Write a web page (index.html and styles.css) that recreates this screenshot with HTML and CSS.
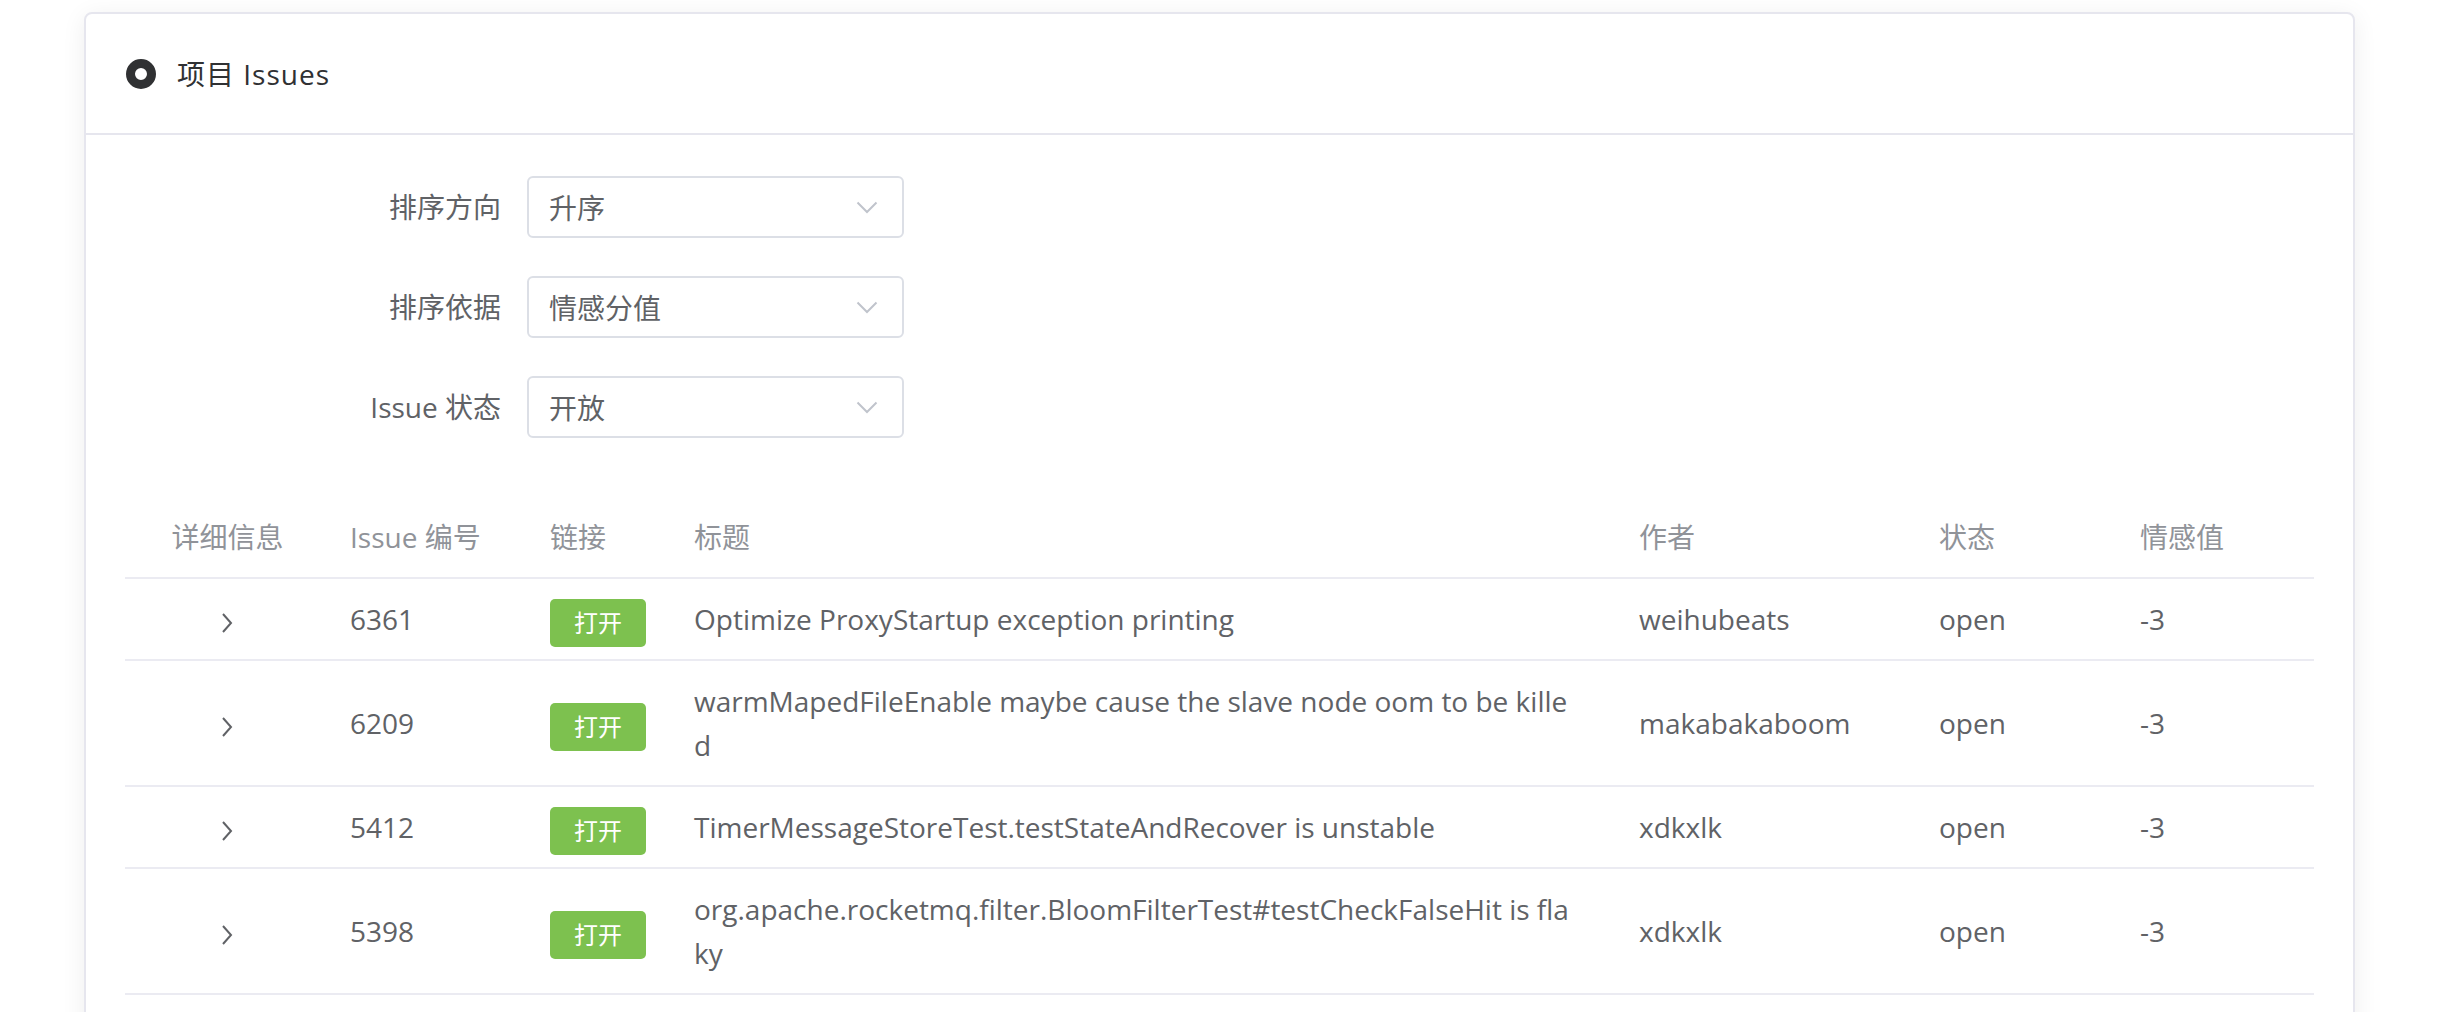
FILE: index.html
```html
<!DOCTYPE html>
<html lang="zh-CN">
<head>
<meta charset="utf-8">
<title>项目 Issues</title>
<link rel="stylesheet" href="styles.css">
</head>
<body>
<div class="card">
  <div class="card-header">
    <svg class="title-icon" width="30" height="30" viewBox="0 0 30 30"><circle cx="15" cy="15" r="10.5" fill="none" stroke="#303133" stroke-width="9"/></svg>
    <span class="card-title">项目 Issues</span>
  </div>
  <div class="card-body">
    <form class="filter-form">
      <div class="form-item">
        <label class="form-label">排序方向</label>
        <div class="select"><span class="select-value">升序</span><svg class="select-arrow" width="22" height="13" viewBox="0 0 22 13"><path d="M1.5 1.5 L11 11 L20.5 1.5" fill="none" stroke="#c0c4cc" stroke-width="2"/></svg></div>
      </div>
      <div class="form-item">
        <label class="form-label">排序依据</label>
        <div class="select"><span class="select-value">情感分值</span><svg class="select-arrow" width="22" height="13" viewBox="0 0 22 13"><path d="M1.5 1.5 L11 11 L20.5 1.5" fill="none" stroke="#c0c4cc" stroke-width="2"/></svg></div>
      </div>
      <div class="form-item">
        <label class="form-label">Issue 状态</label>
        <div class="select"><span class="select-value">开放</span><svg class="select-arrow" width="22" height="13" viewBox="0 0 22 13"><path d="M1.5 1.5 L11 11 L20.5 1.5" fill="none" stroke="#c0c4cc" stroke-width="2"/></svg></div>
      </div>
    </form>
    <table class="issues">
      <colgroup>
        <col class="c-detail"><col class="c-num"><col class="c-link"><col class="c-title"><col class="c-author"><col class="c-state"><col class="c-score">
      </colgroup>
      <thead>
        <tr><th class="center">详细信息</th><th>Issue 编号</th><th>链接</th><th>标题</th><th>作者</th><th>状态</th><th>情感值</th></tr>
      </thead>
      <tbody>
        <tr>
          <td class="center"><svg class="expand" width="12" height="20" viewBox="0 0 12 20"><path d="M2 1 L10 10 L2 19" fill="none" stroke="#606266" stroke-width="2"/></svg></td>
          <td>6361</td><td><span class="tag">打开</span></td>
          <td class="title">Optimize ProxyStartup exception printing</td>
          <td>weihubeats</td><td>open</td><td>-3</td>
        </tr>
        <tr>
          <td class="center"><svg class="expand" width="12" height="20" viewBox="0 0 12 20"><path d="M2 1 L10 10 L2 19" fill="none" stroke="#606266" stroke-width="2"/></svg></td>
          <td>6209</td><td><span class="tag">打开</span></td>
          <td class="title">warmMapedFileEnable maybe cause the slave node oom to be killed</td>
          <td>makabakaboom</td><td>open</td><td>-3</td>
        </tr>
        <tr>
          <td class="center"><svg class="expand" width="12" height="20" viewBox="0 0 12 20"><path d="M2 1 L10 10 L2 19" fill="none" stroke="#606266" stroke-width="2"/></svg></td>
          <td>5412</td><td><span class="tag">打开</span></td>
          <td class="title">TimerMessageStoreTest.testStateAndRecover is unstable</td>
          <td>xdkxlk</td><td>open</td><td>-3</td>
        </tr>
        <tr>
          <td class="center"><svg class="expand" width="12" height="20" viewBox="0 0 12 20"><path d="M2 1 L10 10 L2 19" fill="none" stroke="#606266" stroke-width="2"/></svg></td>
          <td>5398</td><td><span class="tag">打开</span></td>
          <td class="title">org.apache.rocketmq.filter.BloomFilterTest#testCheckFalseHit is flaky</td>
          <td>xdkxlk</td><td>open</td><td>-3</td>
        </tr>
      </tbody>
    </table>
  </div>
</div>
</body>
</html>
```

FILE: styles.css
```css
* { box-sizing: border-box; }
html, body { margin: 0; padding: 0; background: #ffffff; }
body {
  font-family: "Open Sans", "Noto Sans CJK SC", sans-serif;
  font-size: 28px;
  color: #606266;
  padding: 12px 91px 0 84px;
  overflow: hidden;
}
.card {
  background: #fff;
  border: 2px solid #e6e6ee;
  border-radius: 8px;
  box-shadow: 0 4px 24px rgba(0, 0, 0, 0.07);
}
.card-header {
  height: 121px;
  border-bottom: 2px solid #e6e6ee;
  display: flex;
  align-items: center;
  padding: 0 40px;
  gap: 21px;
}
.title-icon { display: block; flex: none; }
.card-title {
  font-size: 28px;
  color: #303133;
  line-height: 40px;
  letter-spacing: 1px;
}
.card-body { padding: 41px 39px 40px; }
.filter-form { margin: 0 0 59px; }
.form-item {
  display: flex;
  align-items: center;
  margin-bottom: 38px;
}
.form-item:last-child { margin-bottom: 0; }
.form-label {
  width: 402px;
  padding-right: 26px;
  text-align: right;
  line-height: 62px;
  color: #606266;
}
.select {
  width: 377px;
  height: 62px;
  border: 2px solid #dcdfe6;
  border-radius: 6px;
  display: flex;
  align-items: center;
  justify-content: space-between;
  padding: 0 24px 0 20px;
}
.select-value { color: #606266; }
.select-arrow { display: block; }
.issues {
  width: 2189px;
  border-collapse: collapse;
  table-layout: fixed;
}
.c-detail { width: 205px; }
.c-num { width: 200px; }
.c-link { width: 144px; }
.c-title { width: 945px; }
.c-author { width: 300px; }
.c-state { width: 201px; }
.c-score { width: 194px; }
.issues th, .issues td {
  padding: 18px 20px;
  line-height: 44px;
  text-align: left;
  border-bottom: 2px solid #ebebf2;
  font-weight: normal;
  vertical-align: middle;
}
.issues th { color: #909399; }
.issues td { color: #606266; }
.issues .center { text-align: center; }
.issues td.title { word-break: break-all; padding-right: 45px; }
.expand { display: inline-block; vertical-align: middle; margin: -4px 0 -4px -2px; }
.tag {
  display: inline-block;
  width: 96px;
  height: 48px;
  margin: -6px 0;
  line-height: 48px;
  text-align: center;
  background: #7dc14f;
  color: #ffffff;
  font-size: 24px;
  border-radius: 5px;
  vertical-align: middle;
}
```
